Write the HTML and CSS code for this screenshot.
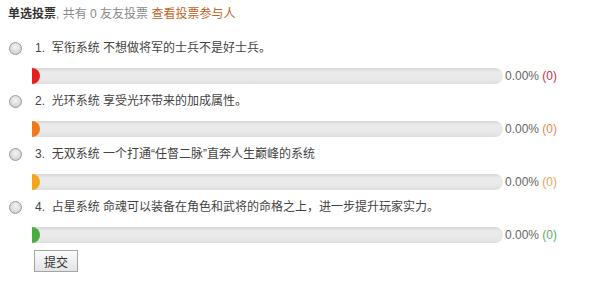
FILE: index.html
```html
<!DOCTYPE html>
<html lang="zh">
<head>
<meta charset="utf-8">
<link rel="stylesheet" href="styles.css">
</head>
<body>
<div class="poll">
  <div class="title"><b>单选投票</b><span class="meta">, 共有 0 友友投票</span> <a class="link" href="#">查看投票参与人</a></div>
  <div class="option">
    <div class="label"><span class="radio"></span><span class="text">1.&nbsp; 军衔系统 不想做将军的士兵不是好士兵。</span></div>
    <div class="barrow"><div class="bar"><div class="fill c1"></div></div><span class="pct">0.00% <span class="n1">(0)</span></span></div>
  </div>
  <div class="option">
    <div class="label"><span class="radio"></span><span class="text">2.&nbsp; 光环系统 享受光环带来的加成属性。</span></div>
    <div class="barrow"><div class="bar"><div class="fill c2"></div></div><span class="pct">0.00% <span class="n2">(0)</span></span></div>
  </div>
  <div class="option">
    <div class="label"><span class="radio"></span><span class="text">3.&nbsp; 无双系统 一个打通“任督二脉”直奔人生巅峰的系统</span></div>
    <div class="barrow"><div class="bar"><div class="fill c3"></div></div><span class="pct">0.00% <span class="n3">(0)</span></span></div>
  </div>
  <div class="option">
    <div class="label"><span class="radio"></span><span class="text">4.&nbsp; 占星系统 命魂可以装备在角色和武将的命格之上，进一步提升玩家实力。</span></div>
    <div class="barrow"><div class="bar"><div class="fill c4"></div></div><span class="pct">0.00% <span class="n4">(0)</span></span></div>
  </div>
  <div class="actions"><button class="submit">提交</button></div>
</div>
</body>
</html>
```
FILE: styles.css
```css
html, body { margin: 0; padding: 0; background: #fff; }
body { font-family: "Liberation Sans", "Noto Sans CJK SC", sans-serif; font-size: 12px; color: #444; }
.poll { padding: 4px 8px; }
.title { line-height: 20px; height: 20px; margin-bottom: 14px; }
.title b { color: #333; font-weight: bold; }
.meta { color: #8a8a8a; }
.link { color: #c0641e; text-decoration: none; }
.option { margin-bottom: 7px; }
.label { display: flex; align-items: center; height: 20px; line-height: 20px; }
.radio { width: 11px; height: 11px; margin-left: 1px; margin-right: 13px; border-radius: 50%; border: 1px solid #9c9c9c; background: radial-gradient(circle at 50% 40%, #f4f4f4 0%, #dcdcdc 55%, #bdbdbd 100%); box-sizing: content-box; }
.text { color: #444; }
.barrow { display: flex; align-items: center; margin-top: 10px; padding-left: 24px; height: 16px; }
.bar { width: 471px; height: 16px; border-radius: 0 8px 8px 0; background: linear-gradient(#d6d6d6 0%, #ebebeb 25%, #e9e9e9 70%, #dedede 100%); overflow: hidden; }
.fill { width: 8px; height: 16px; border-radius: 0 8px 8px 0; }
.c1 { background: #e2201f; }
.c2 { background: #ef7a1e; }
.c3 { background: #f3a51f; }
.c4 { background: #4cab42; }
.pct { margin-left: 2px; color: #666; white-space: nowrap; }
.n1 { color: #c8333a; }
.n2 { color: #e88a4c; }
.n3 { color: #eea452; }
.n4 { color: #5cab5c; }
.actions { padding-left: 26px; margin-top: 2px; }
.submit { width: 44px; height: 22px; padding: 0; border: 1px solid #a4a4a4; border-radius: 0; background: linear-gradient(#fbfbfb, #e4e4e4); font-family: "Liberation Sans", "Noto Sans CJK SC", sans-serif; font-size: 12px; color: #333; }
```
